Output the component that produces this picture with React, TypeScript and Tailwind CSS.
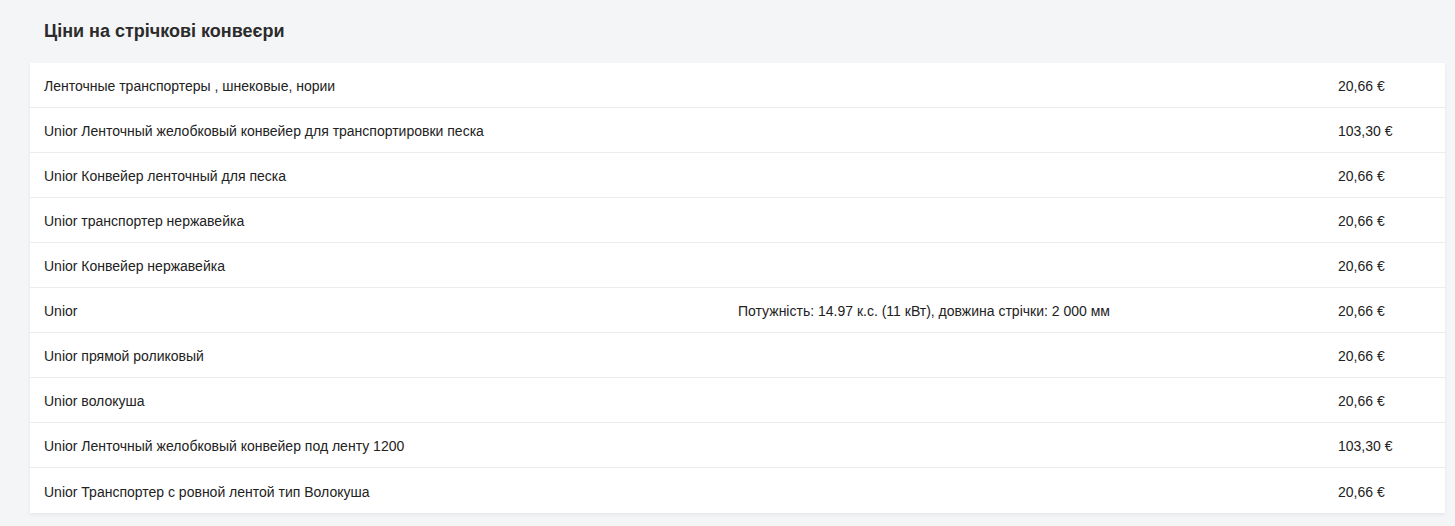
const ROWS: { name: string; spec?: string; price: string }[] = [
  { name: "Ленточные транспортеры , шнековые, нории", price: "20,66 €" },
  { name: "Unior Ленточный желобковый конвейер для транспортировки песка", price: "103,30 €" },
  { name: "Unior Конвейер ленточный для песка", price: "20,66 €" },
  { name: "Unior транспортер нержавейка", price: "20,66 €" },
  { name: "Unior Конвейер нержавейка", price: "20,66 €" },
  {
    name: "Unior",
    spec: "Потужність: 14.97 к.с. (11 кВт), довжина стрічки: 2 000 мм",
    price: "20,66 €",
  },
  { name: "Unior прямой роликовый", price: "20,66 €" },
  { name: "Unior волокуша", price: "20,66 €" },
  { name: "Unior Ленточный желобковый конвейер под ленту 1200", price: "103,30 €" },
  { name: "Unior Транспортер с ровной лентой тип Волокуша", price: "20,66 €" },
];

export default function App() {
  return (
    <div className="min-h-screen bg-[#f4f5f7] pl-[30px] pr-[10px] pt-[20px] pb-[14px] font-['Liberation_Sans',Arial,sans-serif] text-[#222]">
      <h2 className="pl-[14px] text-[18px] leading-[22px] font-bold text-[#2b2b2b] mb-[21px]">
        Ціни на стрічкові конвеєри
      </h2>
      <div className="bg-white shadow-[0_2px_4px_rgba(0,0,0,0.06)]">
        {ROWS.map((r, i) => (
          <div
            key={i}
            className={
              "grid grid-cols-[694px_600px_1fr] items-center h-[45px] px-[14px] pt-[3px] text-[14px] " +
              (i < ROWS.length - 1 ? "border-b border-[#ececec]" : "")
            }
          >
            <span>{r.name}</span>
            <span>{r.spec ?? ""}</span>
            <span>{r.price}</span>
          </div>
        ))}
      </div>
    </div>
  );
}
